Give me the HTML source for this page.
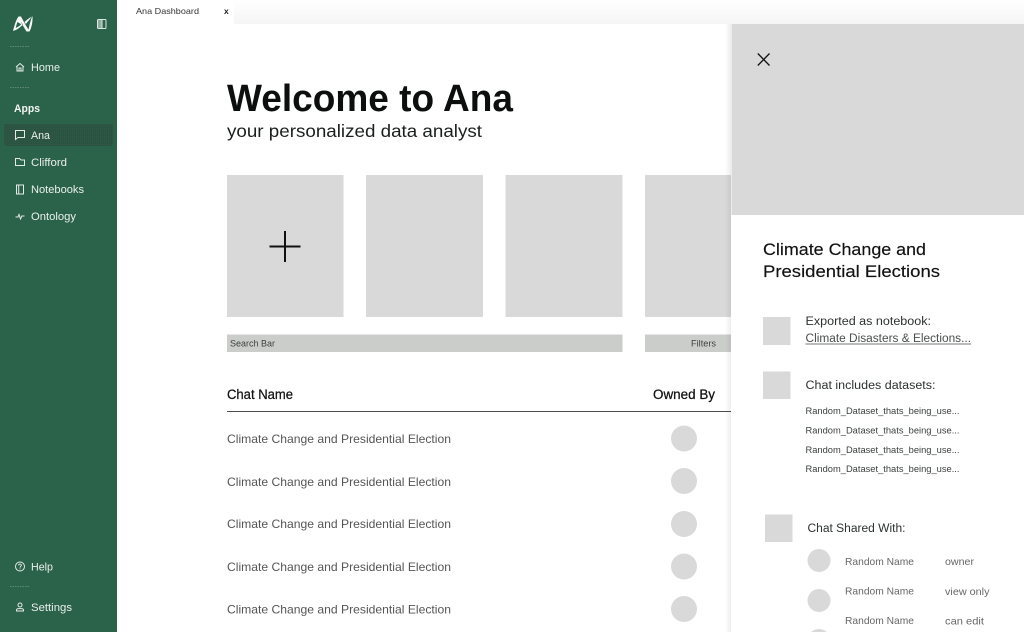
<!DOCTYPE html>
<html><head><meta charset="utf-8"><title>Ana Dashboard</title>
<style>
html,body{margin:0;padding:0;background:#fff;width:1024px;height:632px;overflow:hidden}
svg{display:block}
text{font-family:"Liberation Sans",sans-serif;white-space:pre}
.n{fill:#e9efec;font-size:11px}
.r{fill:#555;font-size:12px}
.d{fill:#3a3f3c;font-size:9px}
.p{fill:#2c322f;font-size:11.5px}
.g{fill:#666;font-size:10.5px}
.ic{fill:none;stroke:#e4ebe7;stroke-width:1}
</style></head><body>
<svg xmlns="http://www.w3.org/2000/svg" width="1024" height="632" viewBox="0 0 1024 632">
<defs>
<linearGradient id="top" x1="0" y1="0" x2="0" y2="1"><stop offset="0" stop-color="#fff"/><stop offset="1" stop-color="#f5f5f5"/></linearGradient>
<linearGradient id="sh" x1="0" y1="0" x2="1" y2="0"><stop offset="0" stop-color="#000" stop-opacity="0"/><stop offset="1" stop-color="#000" stop-opacity=".07"/></linearGradient>
<pattern id="dots" width="2" height="2" patternUnits="userSpaceOnUse"><rect width="2" height="2" fill="#2a5442"/><rect width="1" height="1" fill="#355747"/></pattern>
</defs>
<rect width="1024" height="632" fill="#fff"/>
<rect x="234" y="0" width="790" height="24" fill="url(#top)"/>

<!-- sidebar -->
<rect x="0" y="0" width="117" height="632" fill="#2b624a"/>
<path d="M13 31 C14.500 25 16 20 18.500 16.500 L21 16.500 C24 22 26 26 28.500 29.500 C29.500 25 30.500 20 32.500 16 C32.800 21 32 27 29.500 31.500 L26.500 31.500 C24 27.500 22 24 20.500 21.500 L23 24.500 C20 27.500 17 30 13 31 Z M17.500 22 C16.500 24.500 16 26.500 15.800 28 C17.500 27 19.500 26 21.200 24.200 Z M32 16.500 C29 18 26.500 20 24.500 22 L25.800 24 C28 21.500 30 19 32 16.500 Z" fill="#f6f8f7" fill-rule="evenodd"/>
<rect x="97.500" y="19.500" width="8.500" height="9" rx="1" fill="none" stroke="#dfe7e3" stroke-width="1"/>
<rect x="98" y="20" width="3.500" height="8" fill="#dfe7e3" opacity=".55"/>
<path d="M102 19.500V28.500" stroke="#dfe7e3" stroke-width="1"/>
<path d="M10 46.500H30M10 87.500H30M10 586.500H30" stroke="#5f8876" stroke-width="1" stroke-dasharray="1.500 1"/>
<rect x="4" y="124" width="109" height="22" rx="2" fill="url(#dots)"/>
<!-- icons -->
<path class="ic" d="M16 67 L20 63.500 L24 67 M17 66.500 V71 H23 V66.500 M19 71 V68 H21 V71"/>
<path class="ic" d="M15.500 130.500 H24.500 V137.500 H18 L15.500 139.500 Z"/>
<path class="ic" d="M15.500 158.500 H19.500 L21 160 H24.500 V165.500 H15.500 Z"/>
<path class="ic" d="M16.500 185 H23.500 V194 H16.500 Z M18.700 185 V194"/>
<path class="ic" d="M15.500 217 H18 L19 214.500 L20.500 219 L21.800 216 H24.500"/>
<circle class="ic" cx="20" cy="566.500" r="4.500"/>
<path d="M18.600 565.400 C18.600 563.600 21.400 563.600 21.400 565.300 C21.400 566.400 20 566.400 20 567.600" fill="none" stroke="#e4ebe7" stroke-width=".9"/>
<rect x="19.600" y="568.400" width=".9" height=".9" fill="#e4ebe7"/>
<circle class="ic" cx="20" cy="605" r="2"/>
<path class="ic" d="M16.500 611 V609.800 Q17 608.600 18 608.600 H22 Q23 608.600 23.500 609.800 V611 Z"/>

<text class="n" x="31" y="71" textLength="29" lengthAdjust="spacingAndGlyphs">Home</text>
<text x="14" y="112" font-size="11" font-weight="700" fill="#f1f5f3" textLength="26" lengthAdjust="spacingAndGlyphs">Apps</text>
<text class="n" x="31" y="139" textLength="19" lengthAdjust="spacingAndGlyphs">Ana</text>
<text class="n" x="31" y="166" textLength="36" lengthAdjust="spacingAndGlyphs">Clifford</text>
<text class="n" x="31" y="193" textLength="53" lengthAdjust="spacingAndGlyphs">Notebooks</text>
<text class="n" x="31" y="220" textLength="45" lengthAdjust="spacingAndGlyphs">Ontology</text>
<text class="n" x="31" y="570.500" textLength="22" lengthAdjust="spacingAndGlyphs">Help</text>
<text class="n" x="31" y="611" textLength="41" lengthAdjust="spacingAndGlyphs">Settings</text>

<!-- tab -->
<text x="136" y="14" font-size="8.500" fill="#333" textLength="63" lengthAdjust="spacingAndGlyphs">Ana Dashboard</text>
<text x="224" y="14" font-size="8.500" font-weight="700" fill="#222">x</text>

<!-- main -->
<text x="227" y="111" font-size="38" font-weight="700" fill="#0d0f0e" textLength="286" lengthAdjust="spacingAndGlyphs">Welcome to Ana</text>
<text x="227" y="137" font-size="17.500" fill="#1a1e1c" textLength="255" lengthAdjust="spacingAndGlyphs">your personalized data analyst</text>

<rect x="227" y="175" width="116.500" height="142" fill="#d9d9d9"/>
<rect x="366" y="175" width="117" height="142" fill="#d9d9d9"/>
<rect x="505.500" y="175" width="117" height="142" fill="#d9d9d9"/>
<rect x="645" y="175" width="90" height="142" fill="#d9d9d9"/>
<path d="M285 231V262M269.500 246.500H300.500" stroke="#111" stroke-width="2"/>

<rect x="227" y="334.500" width="395.500" height="17.500" fill="#cbcdcb"/>
<rect x="645" y="334.500" width="90" height="17.500" fill="#cbcdcb"/>
<text x="230" y="346.500" font-size="8.800" fill="#3d423f" textLength="45" lengthAdjust="spacingAndGlyphs">Search Bar</text>
<text x="691" y="346.500" font-size="8.800" fill="#3d423f" textLength="25" lengthAdjust="spacingAndGlyphs">Filters</text>

<text x="227" y="399" font-size="13.500" fill="#111" stroke="#111" stroke-width=".25" textLength="66" lengthAdjust="spacingAndGlyphs">Chat Name</text>
<text x="653" y="399" font-size="13.500" fill="#111" stroke="#111" stroke-width=".25" textLength="62" lengthAdjust="spacingAndGlyphs">Owned By</text>
<rect x="227" y="411" width="505" height="1" fill="#4d4d4d"/>

<text class="r" x="227" y="443" textLength="224" lengthAdjust="spacingAndGlyphs">Climate Change and Presidential Election</text>
<text class="r" x="227" y="486" textLength="224" lengthAdjust="spacingAndGlyphs">Climate Change and Presidential Election</text>
<text class="r" x="227" y="528" textLength="224" lengthAdjust="spacingAndGlyphs">Climate Change and Presidential Election</text>
<text class="r" x="227" y="571" textLength="224" lengthAdjust="spacingAndGlyphs">Climate Change and Presidential Election</text>
<text class="r" x="227" y="613.500" textLength="224" lengthAdjust="spacingAndGlyphs">Climate Change and Presidential Election</text>
<g fill="#d9d9d9">
<circle cx="684" cy="438.500" r="13"/><circle cx="684" cy="481" r="13"/><circle cx="684" cy="524" r="13"/><circle cx="684" cy="566.500" r="13"/><circle cx="684" cy="609" r="13"/>
</g>

<!-- side panel -->
<rect x="725" y="24" width="6" height="608" fill="url(#sh)"/>
<rect x="731" y="24" width="293" height="608" fill="#fff"/>
<rect x="731.500" y="24" width="292.500" height="191" fill="#d9d9d9"/>
<path d="M757.800 53.500L769.500 65.500M769.500 53.500L757.800 65.500" stroke="#111" stroke-width="1.300" fill="none"/>

<text x="763" y="255" font-size="17" fill="#111" stroke="#111" stroke-width=".15" textLength="163" lengthAdjust="spacingAndGlyphs">Climate Change and</text>
<text x="763" y="277" font-size="17" fill="#111" stroke="#111" stroke-width=".15" textLength="177" lengthAdjust="spacingAndGlyphs">Presidential Elections</text>

<rect x="763" y="317" width="27.500" height="28" fill="#d9d9d9"/>
<rect x="763" y="371.500" width="27.500" height="27.500" fill="#d9d9d9"/>
<rect x="765" y="514.500" width="27.500" height="27.500" fill="#d9d9d9"/>

<text class="p" x="805.500" y="325" textLength="125.500" lengthAdjust="spacingAndGlyphs">Exported as notebook:</text>
<text class="p" x="805.500" y="342" style="fill:#4a4f4c" textLength="165.500" lengthAdjust="spacingAndGlyphs">Climate Disasters &amp; Elections...</text>
<rect x="805.500" y="343.500" width="165.500" height="1" fill="#777"/>
<text class="p" x="805.500" y="389" textLength="130" lengthAdjust="spacingAndGlyphs">Chat includes datasets:</text>

<text class="d" x="805.500" y="414" textLength="154" lengthAdjust="spacingAndGlyphs">Random_Dataset_thats_being_use...</text>
<text class="d" x="805.500" y="433.500" textLength="154" lengthAdjust="spacingAndGlyphs">Random_Dataset_thats_being_use...</text>
<text class="d" x="805.500" y="453" textLength="154" lengthAdjust="spacingAndGlyphs">Random_Dataset_thats_being_use...</text>
<text class="d" x="805.500" y="472" textLength="154" lengthAdjust="spacingAndGlyphs">Random_Dataset_thats_being_use...</text>

<text class="p" x="807.500" y="532" textLength="98" lengthAdjust="spacingAndGlyphs">Chat Shared With:</text>

<g fill="#d9d9d9"><circle cx="819" cy="560.500" r="11.500"/><circle cx="819" cy="600.500" r="11.500"/><circle cx="819" cy="640.500" r="11.500"/></g>
<text class="g" x="845" y="565" textLength="69" lengthAdjust="spacingAndGlyphs">Random Name</text>
<text class="g" x="845" y="594.500" textLength="69" lengthAdjust="spacingAndGlyphs">Random Name</text>
<text class="g" x="845" y="624" textLength="69" lengthAdjust="spacingAndGlyphs">Random Name</text>
<text class="g" x="945" y="565" textLength="29" lengthAdjust="spacingAndGlyphs">owner</text>
<text class="g" x="945" y="595" textLength="44.500" lengthAdjust="spacingAndGlyphs">view only</text>
<text class="g" x="945" y="624.500" textLength="39" lengthAdjust="spacingAndGlyphs">can edit</text>
</svg>
</body></html>
